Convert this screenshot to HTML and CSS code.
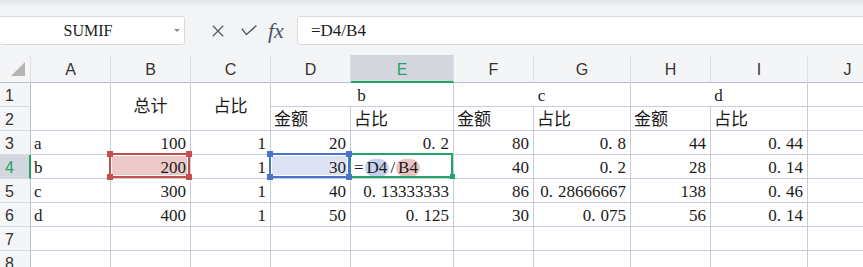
FILE: index.html
```html
<!DOCTYPE html>
<html lang="zh-CN">
<head>
    <meta charset="utf-8">
    <title>SUMIF</title>
    <link rel="stylesheet" href="styles.css">
</head>
<body>
    <div class="toolbar">
        <div class="namebox">
            <span class="name">SUMIF</span>
            <span class="caret"></span>
        </div>
        <div class="tools">
            <svg class="icon-x" width="12" height="12" viewBox="0 0 12 12"><path d="M0.8 0.8L11.2 11.2M11.2 0.8L0.8 11.2" stroke="currentColor" stroke-width="1.3" fill="none"/></svg>
            <svg class="icon-ok" width="16" height="11" viewBox="0 0 16 11"><path d="M0.8 3.8L5.4 9.6L15.4 0.6" stroke="currentColor" stroke-width="1.4" fill="none"/></svg>
            <span class="fx">fx</span>
        </div>
        <div class="formula">=D4/B4</div>
    </div>

    <div class="sheet">
        <!-- column headers -->
        <div class="corner"><svg width="14" height="14" viewBox="0 0 14 14"><polygon points="14,0 14,14 0,14" fill="#b4b4b4"/></svg></div>
        <div class="h">A</div>
        <div class="h">B</div>
        <div class="h">C</div>
        <div class="h">D</div>
        <div class="h on">E</div>
        <div class="h">F</div>
        <div class="h">G</div>
        <div class="h">H</div>
        <div class="h">I</div>
        <div class="h">J</div>

        <!-- row 1 -->
        <div class="rh">1</div>
        <div class="c tall"></div>
        <div class="c tall">总计</div>
        <div class="c tall">占比</div>
        <div class="c wide mid">b</div>
        <div class="c wide mid">c</div>
        <div class="c wide mid">d</div>
        <div class="c"></div>

        <!-- row 2 -->
        <div class="rh">2</div>
        <div class="c">金额</div>
        <div class="c">占比</div>
        <div class="c">金额</div>
        <div class="c">占比</div>
        <div class="c">金额</div>
        <div class="c">占比</div>
        <div class="c"></div>

        <!-- row 3 -->
        <div class="rh">3</div>
        <div class="c">a</div>
        <div class="c n">100</div>
        <div class="c n">1</div>
        <div class="c n">20</div>
        <div class="c n">0<span class="pt">.</span>2</div>
        <div class="c n">80</div>
        <div class="c n">0<span class="pt">.</span>8</div>
        <div class="c n">44</div>
        <div class="c n">0<span class="pt">.</span>44</div>
        <div class="c"></div>

        <!-- row 4 -->
        <div class="rh on">4</div>
        <div class="c">b</div>
        <div class="c n pick-red">200<span class="box red"><b class="hd tl"></b><b class="hd tr"></b><b class="hd bl"></b><b class="hd br"></b></span></div>
        <div class="c n">1</div>
        <div class="c n pick-blue">30<span class="box blue"><b class="hd tl"></b><b class="hd tr"></b><b class="hd bl"></b><b class="hd br"></b></span></div>
        <div class="c active">=<span class="ref ref-d">D4</span>/<span class="ref ref-b">B4</span><span class="box green"><b class="fill"></b></span></div>
        <div class="c n">40</div>
        <div class="c n">0<span class="pt">.</span>2</div>
        <div class="c n">28</div>
        <div class="c n">0<span class="pt">.</span>14</div>
        <div class="c"></div>

        <!-- row 5 -->
        <div class="rh">5</div>
        <div class="c">c</div>
        <div class="c n">300</div>
        <div class="c n">1</div>
        <div class="c n">40</div>
        <div class="c n">0<span class="pt">.</span>13333333</div>
        <div class="c n">86</div>
        <div class="c n">0<span class="pt">.</span>28666667</div>
        <div class="c n">138</div>
        <div class="c n">0<span class="pt">.</span>46</div>
        <div class="c"></div>

        <!-- row 6 -->
        <div class="rh">6</div>
        <div class="c">d</div>
        <div class="c n">400</div>
        <div class="c n">1</div>
        <div class="c n">50</div>
        <div class="c n">0<span class="pt">.</span>125</div>
        <div class="c n">30</div>
        <div class="c n">0<span class="pt">.</span>075</div>
        <div class="c n">56</div>
        <div class="c n">0<span class="pt">.</span>14</div>
        <div class="c"></div>

        <!-- rows 7, 8 -->
        <div class="rh">7</div>
        <div class="c"></div><div class="c"></div><div class="c"></div><div class="c"></div><div class="c"></div>
        <div class="c"></div><div class="c"></div><div class="c"></div><div class="c"></div><div class="c"></div>
        <div class="rh">8</div>
        <div class="c"></div><div class="c"></div><div class="c"></div><div class="c"></div><div class="c"></div>
        <div class="c"></div><div class="c"></div><div class="c"></div><div class="c"></div><div class="c"></div>
    </div>
</body>
</html>
```

FILE: styles.css
```css
* {
    box-sizing: border-box;
}
body {
    margin: 0;
    overflow: hidden;
    background: #fff;
    font-family: "Liberation Serif", "Noto Sans CJK SC", serif;
    font-size: 17px;
    color: #1b1b1b;
}

/* Formula bar */
.toolbar {
    height: 55px;
    display: flex;
    align-items: flex-start;
    padding-top: 16px;
    background: linear-gradient(to bottom, #e2e3e6, #f3f4f6 6px);
}
.namebox {
    width: 186px;
    height: 29px;
    margin-left: -1px;
    display: flex;
    align-items: center;
    background: #fff;
    border: 1px solid #d7dae0;
    border-radius: 3px;
    font-size: 16px;
}
.name {
    flex: 1;
    text-align: center;
    padding-left: 2px;
}
.caret {
    width: 0;
    height: 0;
    margin-right: 4px;
    border-left: 3px solid transparent;
    border-right: 3px solid transparent;
    border-top: 3px solid #8a8d94;
}
.tools {
    width: 112px;
    height: 29px;
    display: flex;
    align-items: center;
    padding-left: 27px;
    color: #555a64;
}
.icon-ok {
    margin-left: 17px;
}
.fx {
    margin-left: 11px;
    font-style: italic;
    font-size: 22px;
    color: #4e5360;
    line-height: 29px;
}
.formula {
    flex: 1;
    height: 29px;
    margin-right: -4px;
    padding-left: 13px;
    background: #fff;
    border: 1px solid #d7dae0;
    border-radius: 3px;
    line-height: 27px;
}

/* Sheet grid */
.sheet {
    display: grid;
    grid-template-columns: 31px 80px 80px 80px 80px 103px 80px 97px 80px 97px 80px;
    grid-template-rows: 28px repeat(8, 24px);
    width: max-content;
}
.corner {
    display: flex;
    align-items: flex-end;
    justify-content: flex-end;
    padding: 0 5px 6px 0;
    background: #f4f5f7;
    border-right: 1px solid #dcdfe5;
    border-bottom: 1px solid #b7bdcf;
}
.h {
    background: #f4f5f7;
    border-right: 1px solid #dcdfe5;
    border-bottom: 1px solid #b7bdcf;
    padding-top: 2px;
    font-family: "Liberation Sans", sans-serif;
    font-size: 16px;
    line-height: 25px;
    color: #333;
    text-align: center;
}
.h.on {
    background: #d3d6dd;
    color: #1ea566;
    border-bottom: 2px solid #1ea566;
}
.rh {
    background: #f4f5f7;
    border-right: 1px solid #b7bdcf;
    border-bottom: 1px solid #d8dbe3;
    padding: 2px 0 0 5px;
    font-family: "Liberation Sans", sans-serif;
    font-size: 16px;
    line-height: 21px;
    color: #333;
}
.rh.on {
    background: #d3d6dd;
    color: #1ea566;
    border-right: 2px solid #1ea566;
}
.c {
    border-right: 1px solid #c7ccdc;
    border-bottom: 1px solid #c7ccdc;
    padding: 2px 4px 0 3px;
    line-height: 21px;
    white-space: nowrap;
}
.n {
    text-align: right;
}
.mid {
    text-align: center;
}
.tall {
    grid-row: span 2;
    display: flex;
    align-items: center;
    justify-content: center;
    padding: 0;
}
.wide {
    grid-column: span 2;
}
.pt {
    padding-right: 5px;
}

/* Selection and reference boxes */
.pick-red {
    position: relative;
    background: #edc9c9;
}
.pick-blue {
    position: relative;
    background: #dde3f4;
}
.active {
    position: relative;
}
.box {
    position: absolute;
    top: -2px;
    left: -2px;
    right: 0;
    bottom: 0;
    border: 2px solid currentColor;
    box-shadow: inset 0 0 0 1px #fff;
    z-index: 1;
}
.box.red {
    color: #c4504d;
}
.box.blue {
    color: #4a73cb;
    z-index: 2;
}
.box.green {
    color: #22a56a;
    box-shadow: none;
}
.hd {
    position: absolute;
    width: 6px;
    height: 6px;
    background: currentColor;
}
.tl { top: -4px; left: -4px; }
.tr { top: -4px; right: -4px; }
.bl { bottom: -4px; left: -4px; }
.br { bottom: -4px; right: -4px; }
.fill {
    position: absolute;
    right: -4px;
    bottom: -3px;
    width: 5px;
    height: 5px;
    background: currentColor;
}
.ref {
    display: inline-block;
    line-height: 18px;
    padding: 0 2px;
    margin: 0 1px;
    border-radius: 9px;
}
.ref-d {
    background: #c6d1ef;
}
.ref-b {
    background: #eac3c3;
}
```
